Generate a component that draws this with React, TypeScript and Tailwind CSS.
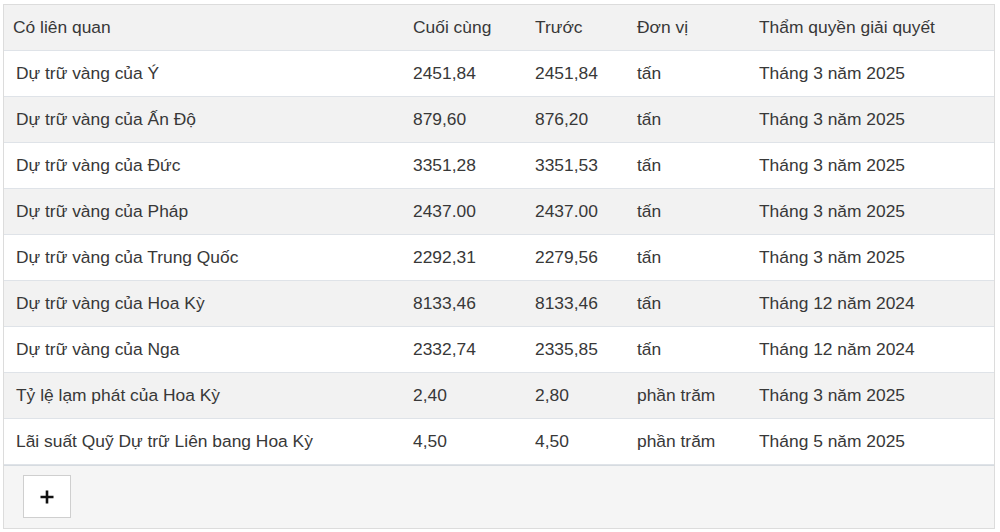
const rows = [
  ["Dự trữ vàng của Ý", "2451,84", "2451,84", "tấn", "Tháng 3 năm 2025"],
  ["Dự trữ vàng của Ấn Độ", "879,60", "876,20", "tấn", "Tháng 3 năm 2025"],
  ["Dự trữ vàng của Đức", "3351,28", "3351,53", "tấn", "Tháng 3 năm 2025"],
  ["Dự trữ vàng của Pháp", "2437.00", "2437.00", "tấn", "Tháng 3 năm 2025"],
  ["Dự trữ vàng của Trung Quốc", "2292,31", "2279,56", "tấn", "Tháng 3 năm 2025"],
  ["Dự trữ vàng của Hoa Kỳ", "8133,46", "8133,46", "tấn", "Tháng 12 năm 2024"],
  ["Dự trữ vàng của Nga", "2332,74", "2335,85", "tấn", "Tháng 12 năm 2024"],
  ["Tỷ lệ lạm phát của Hoa Kỳ", "2,40", "2,80", "phần trăm", "Tháng 3 năm 2025"],
  ["Lãi suất Quỹ Dự trữ Liên bang Hoa Kỳ", "4,50", "4,50", "phần trăm", "Tháng 5 năm 2025"],
];

export default function App() {
  return (
    <div className="w-[1000px] h-[532px] bg-white pt-[4px] pl-[3px] font-['Liberation_Sans',Arial,sans-serif] text-[17.4px] text-[#383838]">
      <div className="w-[992px] border border-[#dcdcdc]">
        <div className="flex h-[46px] items-center bg-[#f2f2f2] border-b border-[#dfe3e8]">
          <div className="w-[409px] pl-[9px]">Có liên quan</div>
          <div className="w-[122px]">Cuối cùng</div>
          <div className="w-[102px]">Trước</div>
          <div className="w-[122px]">Đơn vị</div>
          <div className="flex-1">Thẩm quyền giải quyết</div>
        </div>
        {rows.map((r, i) => (
          <div
            key={i}
            className={
              "flex h-[46px] items-center border-b border-[#dfe3e8] " +
              (i % 2 === 1 ? "bg-[#f2f2f2]" : "bg-white")
            }
          >
            <div className="w-[409px] pl-[12px]">{r[0]}</div>
            <div className="w-[122px]">{r[1]}</div>
            <div className="w-[102px]">{r[2]}</div>
            <div className="w-[122px]">{r[3]}</div>
            <div className="flex-1">{r[4]}</div>
          </div>
        ))}
        <div className="h-[63px] bg-[#f5f5f5] border-t border-[#d6dbe0] pl-[19px] pt-[9px]">
          <button className="w-[48px] h-[43px] bg-white border border-[#cfcfcf] flex items-center justify-center">
            <svg width="16" height="16" viewBox="0 0 16 16">
              <path d="M8 1.5v13M1.5 8h13" stroke="#111" strokeWidth="2.6" />
            </svg>
          </button>
        </div>
      </div>
    </div>
  );
}
